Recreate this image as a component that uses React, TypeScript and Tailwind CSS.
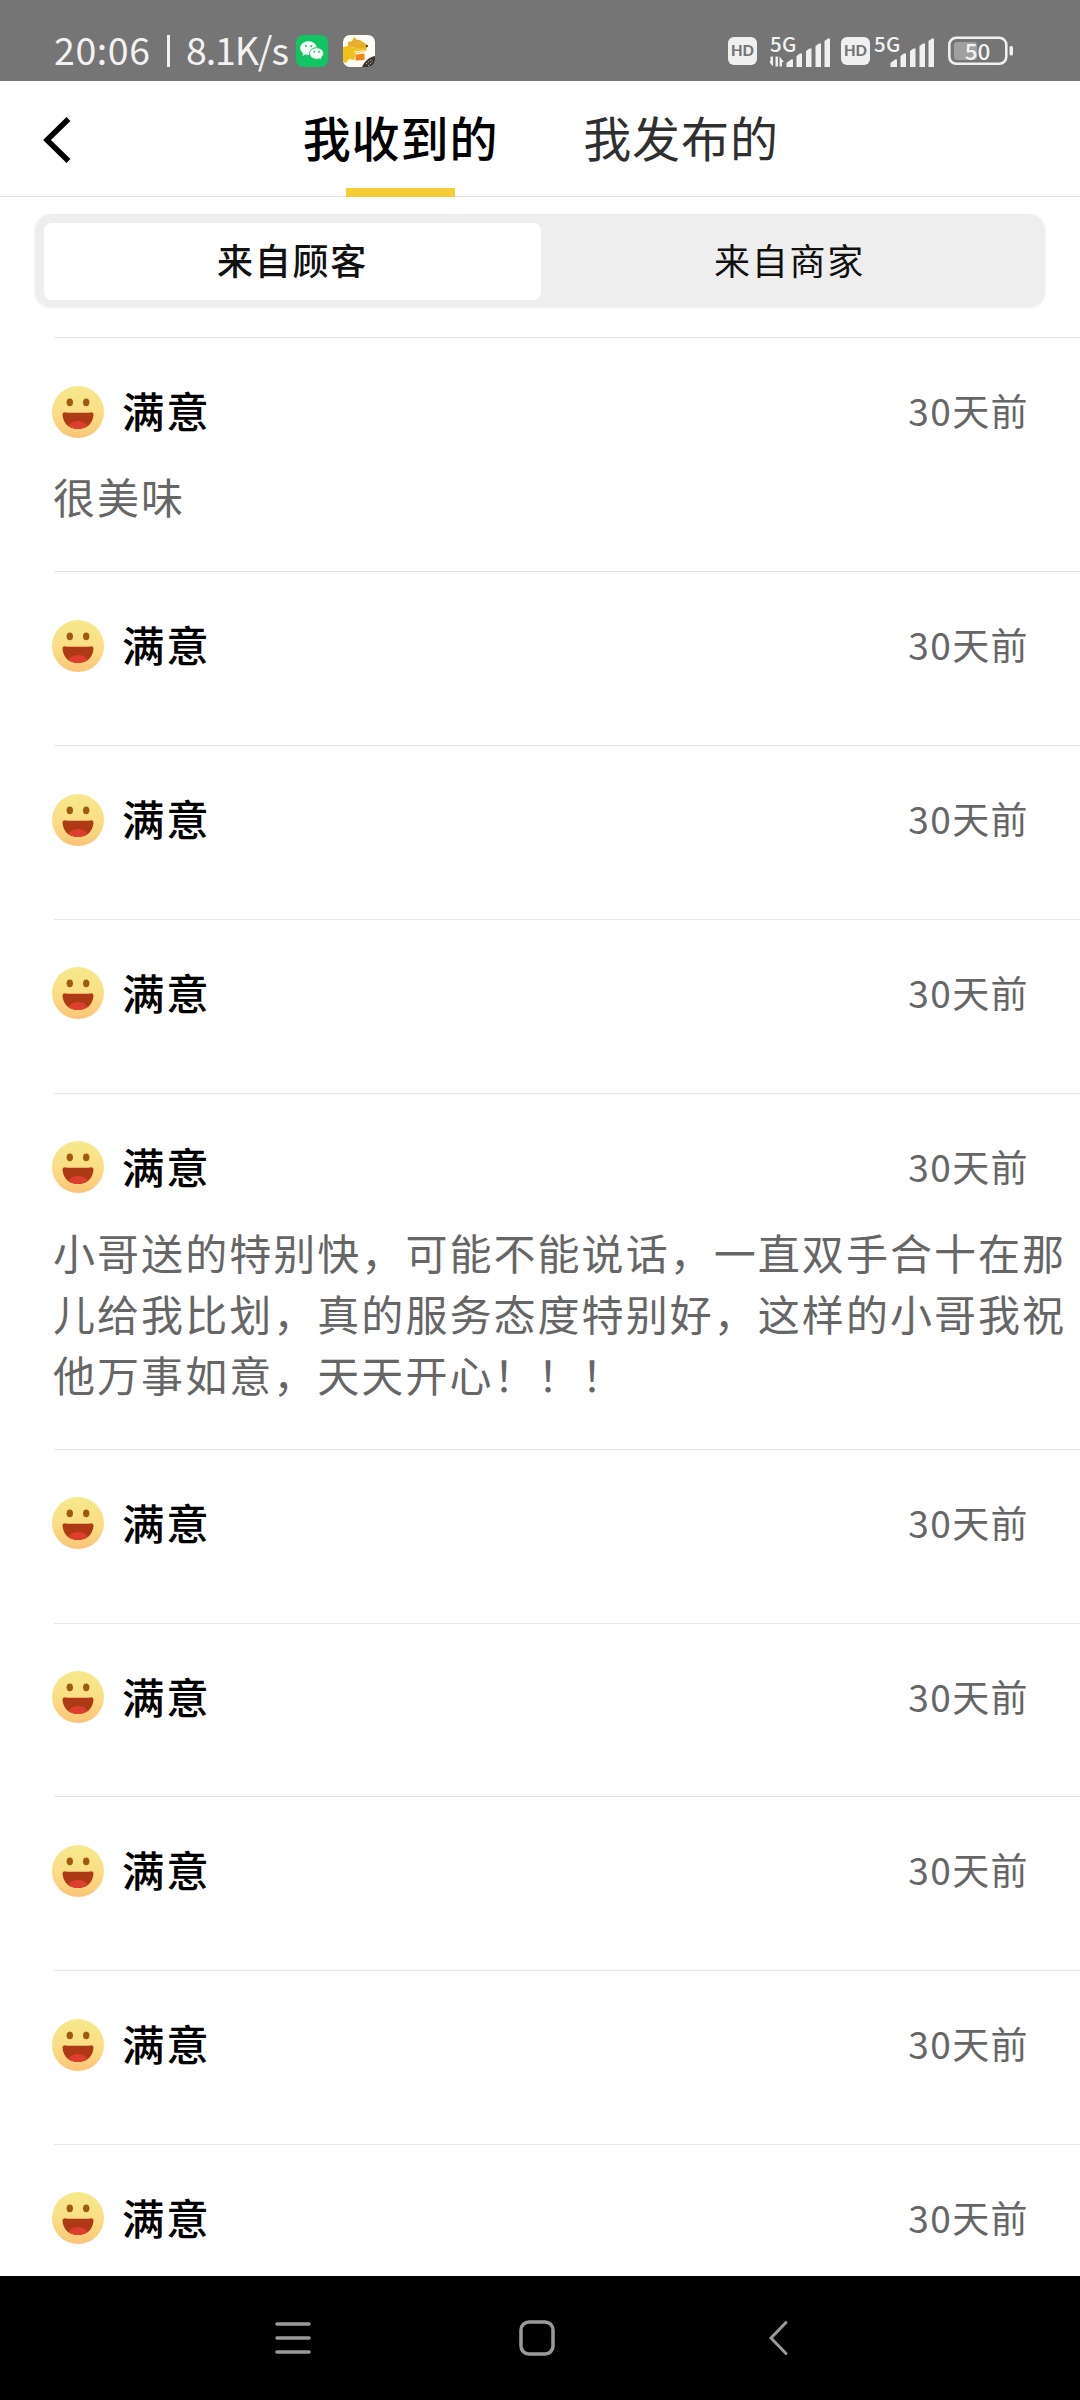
import { useState } from 'react'

interface Review {
  id: number
  rating: string
  time: string
  content?: string
}

const reviews: Review[] = [
  { id: 1, rating: '满意', time: '30天前', content: '很美味' },
  { id: 2, rating: '满意', time: '30天前' },
  { id: 3, rating: '满意', time: '30天前' },
  { id: 4, rating: '满意', time: '30天前' },
  {
    id: 5,
    rating: '满意',
    time: '30天前',
    content:
      '小哥送的特别快，可能不能说话，一直双手合十在那儿给我比划，真的服务态度特别好，这样的小哥我祝他万事如意，天天开心！！！',
  },
  { id: 6, rating: '满意', time: '30天前' },
  { id: 7, rating: '满意', time: '30天前' },
  { id: 8, rating: '满意', time: '30天前' },
  { id: 9, rating: '满意', time: '30天前' },
  { id: 10, rating: '满意', time: '30天前' },
]

function WechatIcon() {
  return (
    <svg viewBox="0 0 32 32" className="w-8 h-8 shrink-0">
      <rect width="32" height="32" rx="7" fill="#12c463" />
      <path
        d="M12.500 6.200c-4.700 0-8.300 3-8.300 6.800 0 2.200 1.100 4.100 3 5.400l-.9 2.600 3.100-1.600c1 .3 2 .5 3.100.5 4.700 0 8.300-3.100 8.300-6.900s-3.600-6.800-8.300-6.800z"
        fill="#f4fff8"
      />
      <path
        d="M20.600 12.700c-3.900 0-7 2.600-7 5.800s3.100 5.800 7 5.800c.9 0 1.800-.1 2.600-.4l2.500 1.400-.6-2.300c1.600-1.100 2.500-2.700 2.500-4.500 0-3.200-3.100-5.800-7-5.800z"
        fill="#f4fff8"
        stroke="#12c463"
        strokeWidth="1"
      />
      <g fill="#3fae74">
        <circle cx="9.800" cy="11" r="1.100" />
        <circle cx="15.300" cy="11" r="1.100" />
        <circle cx="18.300" cy="16.800" r="1" />
        <circle cx="23" cy="16.800" r="1" />
      </g>
    </svg>
  )
}

function KangarooIcon() {
  return (
    <svg viewBox="0 0 32 32" className="w-8 h-8 shrink-0">
      <defs>
        <clipPath id="app-tile">
          <rect width="32" height="32" rx="7" />
        </clipPath>
      </defs>
      <g clipPath="url(#app-tile)">
        <rect width="32" height="32" fill="#fffdf6" />
        <path d="M0 12l5-1 7 2 12 1-2 3-9 1-2 7-5-1-3 4-3-1z" fill="#f2c01c" />
        <path d="M5 7l4-1 2-4 3 3 3 0 3 2 5 3.500-2 3.500-9-.5-9-2.500z" fill="#e5b02c" />
        <circle cx="23.800" cy="11" r="1.100" fill="#3a2a12" />
        <path d="M11 17l11-1" stroke="#f7e7b0" strokeWidth="1.500" />
        <path d="M12.500 19.500l9-1v6.500l-9 .5z" fill="#f0871c" />
        <path d="M19 32c2-5 7-10 13-11v11z" fill="#3a342c" />
        <path d="M23 29l6-5M25 31l5-5" stroke="#cfc8b8" strokeWidth="1" strokeDasharray="1.500 1" />
      </g>
    </svg>
  )
}

function HdBadge() {
  return (
    <div className="w-[29px] h-7 shrink-0 rounded-[6px] bg-[#f0f0f0] flex items-center justify-center text-[15px] leading-none font-black text-[#757575] font-['Lato','Noto_Sans',sans-serif]">
      HD
    </div>
  )
}

function Signal({ data }: { data?: boolean }) {
  return (
    <div className="relative w-[60px] h-[34px] shrink-0">
      <svg viewBox="0 0 60 34" className="w-[60px] h-[34px]" fill="#f0f0f0">
        {data && (
          <path d="M3 22.500v10L-1.500 27H.5v-4.500zM5.500 32.500v-10H8v10zM9.500 22.500L14 28h-2v4.500H9.500z" />
        )}
        <path d="M16.500 33v-4l4.500-3.500h2V33zM26.500 33V22l3.500-2.500h2V33zM36 33V17l3.500-2.500h2V33zM45.500 33V12l3.500-2.500h2V33zM54.500 33V7L58 4.500h2V33z" />
      </svg>
      <span className="absolute left-0 -top-[5px] text-[20.5px] leading-[28px] tracking-[0.3px] font-medium">5G</span>
    </div>
  )
}

function Battery() {
  return (
    <div className="relative w-[66px] h-[30px] shrink-0">
      <svg viewBox="0 0 66 30" className="w-[66px] h-[30px]">
        <rect x="1.300" y="1.800" width="57" height="26" rx="7" fill="none" stroke="#f0f0f0" strokeWidth="2.600" />
        <rect x="6" y="6" width="23" height="18" rx="3" fill="#a0a0a0" />
        <rect x="61.500" y="10" width="3.500" height="9.500" rx="1.500" fill="#f0f0f0" />
      </svg>
      <span className="absolute left-0 -top-[2px] w-[59px] text-center text-[22.5px] leading-[32px] font-medium">50</span>
    </div>
  )
}

function SmileFace() {
  return (
    <svg viewBox="0 0 52 52" className="w-[52px] h-[52px] shrink-0">
      <defs>
        <linearGradient id="face" x1="0" y1="0" x2="0" y2="1">
          <stop offset="0" stopColor="#f6e98c" />
          <stop offset="0.550" stopColor="#fadd84" />
          <stop offset="1" stopColor="#fbc478" />
        </linearGradient>
        <clipPath id="mouth">
          <path d="M10.500 29c0-1.800 1-2.800 2.800-2.600 7.400.5 18 .5 25.400 0 1.800-.2 2.800.8 2.800 2.600C40.500 38 34.500 43 26 43s-14.500-5-15.500-14z" />
        </clipPath>
      </defs>
      <circle cx="26" cy="26" r="26" fill="url(#face)" />
      <ellipse cx="17.800" cy="16.300" rx="3.200" ry="3.900" fill="#9d5a14" />
      <ellipse cx="34.200" cy="16.300" rx="3.200" ry="3.900" fill="#9d5a14" />
      <g clipPath="url(#mouth)">
        <rect x="8" y="24" width="36" height="20" fill="#ad3915" />
        <ellipse cx="26" cy="42" rx="10" ry="7" fill="#dc3f2e" />
      </g>
    </svg>
  )
}

function ReviewRow({ review }: { review: Review }) {
  return (
    <div className="ml-[54px] border-t border-[#e6e6e6] pt-[42px] pb-[35.75px]">
      <div className="-ml-[2px] flex items-center h-[60px] pr-[51px]">
        <div className="pt-[3px]">
          <SmileFace />
        </div>
        <span className="ml-[18px] text-[42.5px] leading-[60px] tracking-[1.8px] font-medium text-black">{review.rating}</span>
        <span className="ml-auto text-[37px] leading-[60px] tracking-[1.4px] text-[#666]">{review.time}</span>
      </div>
      {review.content ? (
        <p className="-ml-[1px] mt-[25px] mb-[9.5px] text-[42px] leading-[61px] tracking-[2.050px] text-[#666]">{review.content}</p>
      ) : (
        <div className="h-[35px]" />
      )}
    </div>
  )
}

export default function App() {
  const [tab, setTab] = useState('received')
  const [source, setSource] = useState('customer')

  return (
    <div className="w-[1080px] h-[2400px] flex flex-col overflow-hidden bg-white font-['Noto_Sans_CJK_SC',sans-serif]">
      {/* Status bar */}
      <div className="h-[81px] shrink-0 bg-[#757575] flex items-center pt-5 pl-[54px] pr-[66px] text-[37.5px] leading-none text-[#f2f2f2]">
        <span className="w-[96px] -mt-1 tracking-[0.6px] whitespace-nowrap">20:06</span>
        <span className="w-[3px] h-8 ml-[17px] mr-[16px] bg-[#f2f2f2]" />
        <span className="w-[110px] -mt-1 tracking-[-1.1px] whitespace-nowrap">8.1K/s</span>
        <WechatIcon />
        <div className="w-[15px] shrink-0" />
        <KangarooIcon />
        <div className="ml-auto flex items-center">
          <HdBadge />
          <div className="w-[13px]" />
          <Signal data />
          <div className="w-[11px]" />
          <HdBadge />
          <div className="w-1" />
          <Signal />
          <div className="w-[14px]" />
          <Battery />
        </div>
      </div>

      {/* Header tabs */}
      <div className="h-[116px] shrink-0 border-b border-[#e6e6e6] flex">
        <svg viewBox="0 0 30 48" className="w-[30px] h-12 mt-[35px] ml-[42px]" fill="none" stroke="#000" strokeWidth="5.500">
          <path d="M26.500 3L5 24l21.500 21" />
        </svg>
        <button onClick={() => setTab('received')} className="ml-[230px] w-[197px] h-[116px] flex flex-col items-center text-[48px] tracking-[0.9px] font-medium text-black">
          <span className="h-[107px] leading-[111px] whitespace-nowrap">我收到的</span>
          {tab === 'received' && <span className="w-[109px] h-[9px] -ml-[1px] bg-[#f5cd37]" />}
        </button>
        <button onClick={() => setTab('sent')} className="ml-[84px] w-[196px] h-[116px] flex flex-col items-center text-[48px] tracking-[0.9px] text-[#2f2f2f]">
          <span className="h-[107px] leading-[111px] whitespace-nowrap">我发布的</span>
          {tab === 'sent' && <span className="w-[109px] h-[9px] bg-[#f5cd37]" />}
        </button>
      </div>

      {/* Source switch */}
      <div className="mt-[17px] ml-[35px] w-[1010px] h-[93px] shrink-0 rounded-2xl bg-[#eeeeee] shadow-[0_1px_3px_rgba(0,0,0,0.08)] p-[9px] pb-[7px] flex text-[36px] tracking-[1.8px] text-[#111]">
        <button onClick={() => setSource('customer')} className={source === 'customer' ? 'w-[497px] rounded-lg bg-white font-medium pb-[5px]' : 'w-[497px] pb-[5px]'}>
          来自顾客
        </button>
        <button onClick={() => setSource('shop')} className={source === 'shop' ? 'flex-1 rounded-lg bg-white font-medium pb-[5px]' : 'flex-1 pb-[5px] pl-[2px]'}>
          来自商家
        </button>
      </div>

      {/* Review list */}
      <div className="mt-[30px] flex-1 min-h-0 overflow-hidden">
        {reviews.map((review) => (
          <ReviewRow key={review.id} review={review} />
        ))}
      </div>

      {/* Navigation bar */}
      <div className="h-[124px] shrink-0 bg-black flex items-center text-[#9a9a9a]">
        <svg viewBox="0 0 36 36" className="w-9 h-9 ml-[275px]" stroke="currentColor" strokeWidth="3.500" strokeLinecap="round">
          <path d="M2 4h32M2 18h32M2 32h32" />
        </svg>
        <svg viewBox="0 0 36 36" className="w-9 h-9 ml-[208px]" fill="none" stroke="currentColor" strokeWidth="3.500">
          <rect x="2" y="2" width="32" height="32" rx="8" />
        </svg>
        <svg viewBox="0 0 22 36" className="w-[22px] h-9 ml-[213px]" fill="none" stroke="currentColor" strokeWidth="3" strokeLinecap="round">
          <path d="M18 2.500L3 18l15 15.500" />
        </svg>
      </div>
    </div>
  )
}
